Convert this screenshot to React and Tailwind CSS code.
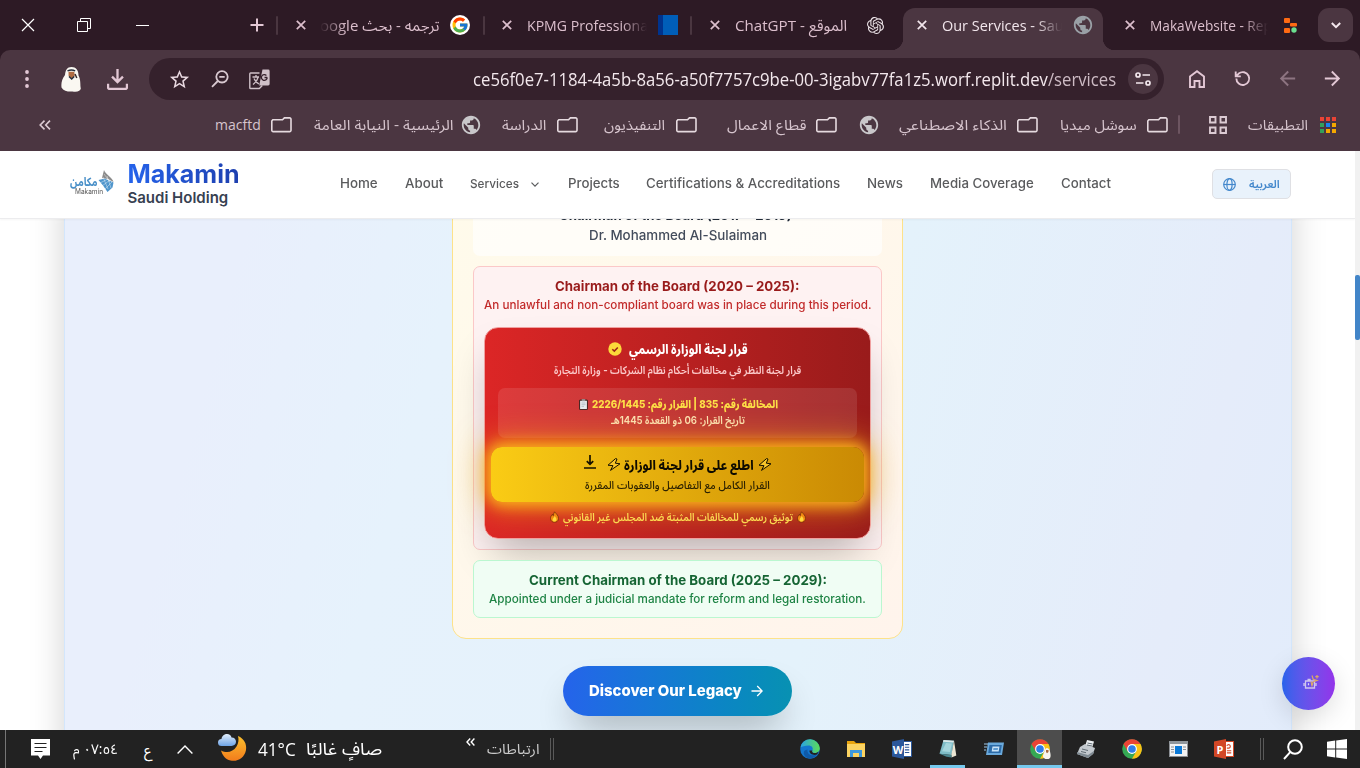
import { useLayoutEffect, useRef } from "react";
import { MdPublic, MdStarBorder, MdArrowForward, MdArrowBack } from "react-icons/md";
import { FcGoogle } from "react-icons/fc";
import { SiOpenai } from "react-icons/si";

/* One line of text, condensed or widened to fill the width of its box. */
function Fit({ className = "", inner = "", rtl = false, children }) {
  const box = useRef(null);
  const text = useRef(null);
  useLayoutEffect(() => {
    const ratio = box.current.clientWidth / text.current.offsetWidth;
    text.current.style.transform = `scaleX(${ratio})`;
  }, []);
  return (
    <div ref={box} className={`shrink-0 whitespace-nowrap ${className}`} dir="ltr">
      <span ref={text} dir={rtl ? "rtl" : "ltr"} className={`inline-block origin-left ${inner}`}>
        {children}
      </span>
    </div>
  );
}

const Cross = ({ className }) => (
  <svg viewBox="0 0 10 10" className={`h-[10px] w-[10px] shrink-0 ${className}`} stroke="currentColor" strokeWidth="1.7" fill="none">
    <path d="M.8.8l8.4 8.4M9.2.8L.8 9.2" />
  </svg>
);

const TabSep = ({ className }) => <div className={`h-[19px] w-[2px] shrink-0 rounded bg-[#4a3640] ${className}`} />;

const Folder = ({ className }) => (
  <svg viewBox="0 0 21 16" className={`h-4 w-[21px] shrink-0 text-[#e6dadf] ${className}`} fill="none" stroke="currentColor" strokeWidth="1.6">
    <path d="M1.800 2.800h9.700L13.400.9h5.300a1.300 1.300 0 0 1 1.300 1.300v11.100a1.300 1.300 0 0 1-1.300 1.300H2.100A1.300 1.300 0 0 1 .8 13.300V4z" />
  </svg>
);

function TabStrip() {
  return (
    <div className="flex h-[50px] items-center text-[15px] leading-6 text-[#dcbfcd]">
      <svg viewBox="0 0 14 14" className="ml-[21px] h-[14px] w-[14px] shrink-0" stroke="#fff" strokeWidth="1.2" fill="none">
        <path d="M1 1l12 12M13 1L1 13" />
      </svg>
      <svg viewBox="0 0 14 14" className="ml-[42px] h-[14px] w-[14px] shrink-0" stroke="#fff" strokeWidth="1" fill="none">
        <path d="M.5 3.500h10v10H.5zM3.500 3.500v-3h10v10h-3" />
      </svg>
      <div className="ml-[45px] h-px w-[13px] shrink-0 bg-white" />
      <svg viewBox="0 0 14 14" className="ml-[101px] h-[14px] w-[14px] shrink-0" stroke="#e3c8d5" strokeWidth="2" fill="none">
        <path d="M7 .5v13M.5 7h13" />
      </svg>
      <TabSep className="ml-[12px]" />
      <Cross className="ml-[18px]" />
      <div className="ml-[14px] flex w-[119px] shrink-0 justify-end overflow-hidden [mask-image:linear-gradient(to_right,transparent,#000_26px)]">
        <Fit rtl className="w-[130px]">ترجمه - بحث Google</Fit>
      </div>
      <div className="ml-[11px] flex h-5 w-5 shrink-0 items-center justify-center rounded-full bg-white">
        <FcGoogle className="h-[18px] w-[18px]" />
      </div>
      <TabSep className="ml-[13px]" />
      <Cross className="ml-[17px]" />
      <div className="ml-[15px] w-[120px] shrink-0 overflow-hidden [mask-image:linear-gradient(to_left,transparent,#000_26px)]">
        <Fit className="w-[125px]">KPMG Professional</Fit>
      </div>
      <div className="ml-[11px] h-5 w-5 shrink-0 border-l-[5px] border-[#00338d] bg-[#005eb8]" />
      <TabSep className="ml-[12px]" />
      <Cross className="ml-[18px]" />
      <Fit rtl className="ml-[15px] w-[112px]">الموقع - ChatGPT</Fit>
      <SiOpenai className="ml-[20px] h-[17px] w-[17px] shrink-0 text-[#ece4e8]" />
      <div className="mt-2 ml-[19px] flex h-[42px] w-[200px] shrink-0 items-center rounded-t-[12px] bg-[#4b3641] pb-2 text-[#f2e6ec]">
        <div className="-ml-3 h-3 w-3 shrink-0 translate-y-[19px] bg-[radial-gradient(circle_at_0_0,transparent_12px,#4b3641_12.5px)]" />
        <Cross className="ml-[14px]" />
        <div className="ml-[15px] w-[120px] shrink-0 overflow-hidden [mask-image:linear-gradient(to_left,transparent,#000_26px)]">
          <Fit className="w-[134px]">Our Services - Saudi</Fit>
        </div>
        <MdPublic className="ml-[10px] h-[22px] w-[22px] shrink-0 text-[#9aa0a6]" />
        <div className="ml-[9px] h-3 w-3 shrink-0 translate-y-[19px] bg-[radial-gradient(circle_at_100%_0,transparent_12px,#4b3641_12.5px)]" />
      </div>
      <Cross className="ml-[22px]" />
      <div className="ml-[15px] w-[118px] shrink-0 overflow-hidden [mask-image:linear-gradient(to_left,transparent,#000_26px)]">
        <Fit className="w-[134px]">MakaWebsite - Replit</Fit>
      </div>
      <svg viewBox="0 0 13 15" className="ml-[16px] h-[15px] w-[13px] shrink-0" fill="#ff6a13">
        <rect x="0" y="0" width="6" height="5" rx="1" />
        <rect x="6" y="5" width="7" height="3.500" rx="1" />
        <rect x="0" y="10" width="6" height="5" rx="1" />
        <circle cx="10" cy="12" r="2.700" fill="#6bdf8f" />
      </svg>
      <div className="ml-[21px] flex h-[34px] w-[35px] shrink-0 items-center justify-center rounded-[11px] bg-[#4b3641]">
        <svg viewBox="0 0 10 7" className="h-[7px] w-[10px]" stroke="#f4e7ed" strokeWidth="2" fill="none">
          <path d="M.8 1L5 5.200 9.200 1" />
        </svg>
      </div>
    </div>
  );
}

function Toolbar() {
  return (
    <div className="flex h-[50px] items-center rounded-t-[10px] bg-[#4b3641] pt-2 text-[#e3c8d5]">
      <svg viewBox="0 0 4 18" className="ml-[25px] h-[18px] w-[4px] shrink-0" fill="currentColor">
        <circle cx="2" cy="2" r="1.900" /><circle cx="2" cy="9" r="1.900" /><circle cx="2" cy="16" r="1.900" />
      </svg>
      <svg viewBox="0 0 20 25" className="ml-[32px] h-[25px] w-[20px] shrink-0">
        <path d="M10.500 0C6 0 4.500 3 4 8 1 12 0 16 .5 20.500c2 3.500 7 4.500 11 4 5 .8 8-.5 8.300-3C19 18 20 13 17.500 8.500 17.500 3 15 0 10.500 0z" fill="#faf8f2" />
        <path d="M7.500 4.800h5.800l.4 4.200-3 3.200L7.600 9z" fill="#b06c43" />
        <path d="M6.500 3.800c2.500-1 5.500-1 7.700 0M8 9.500l2.700 2.500 2.500-2.500" stroke="#26303d" strokeWidth="1.400" fill="none" />
        <path d="M14 7l1.800 4" stroke="#3a2c2c" strokeWidth="1.500" />
      </svg>
      <svg viewBox="0 0 20 20" className="ml-[26px] h-[21px] w-[21px] shrink-0" stroke="currentColor" strokeWidth="2.200" fill="none">
        <path d="M10 0v12M4.800 7.200L10 12.400l5.200-5.200M1 14v3.500c0 .8.700 1.500 1.500 1.500h15c.8 0 1.500-.7 1.500-1.500V14" />
      </svg>
      <div className="ml-[21px] flex h-[42px] w-[1015px] shrink-0 items-center rounded-full bg-[#35212c]">
        <MdStarBorder className="ml-[19px] h-[23px] w-[23px] shrink-0 text-[#e8d8e0]" />
        <svg viewBox="0 0 18 18" className="ml-[20px] h-[18px] w-[18px] shrink-0" stroke="#d9c9d1" strokeWidth="1.800" fill="none">
          <circle cx="11" cy="6.800" r="5.700" /><path d="M6.800 11L1 16.800M8.300 6.800h5.400" />
        </svg>
        <svg viewBox="0 0 21 21" className="ml-[20px] h-[21px] w-[21px] shrink-0" fill="none">
          <path d="M10.500 4H1.600a.8.8 0 0 0-.8.8v13.900c0 .5.300.8.8.8h8.700l3-3" stroke="#cfc0c8" strokeWidth="1.400" />
          <path d="M3.500 8h6.500M7 6v2M9 8.500c-.8 3.200-3 5.500-5 7M5 9.500c1.200 2.500 3 4.500 5 5.500" stroke="#cfc0c8" strokeWidth="1.300" />
          <path d="M13.500.5h5.700a1.400 1.400 0 0 1 1.400 1.400v13.200a1.400 1.400 0 0 1-1.400 1.400h-9z" fill="#cfc0c8" />
          <path d="M18.200 8.500h-2.700M18.200 8.500A2.900 2.900 0 1 1 17.400 6.500" stroke="#35212c" strokeWidth="1.300" />
        </svg>
        <Fit className="ml-[203px] w-[643px] text-[18px] leading-7 text-[#f3e8ed]">
          ce56f0e7-1184-4a5b-8a56-a50f7757c9be-00-3igabv77fa1z5.worf.replit.dev<span className="text-[#cdbbc4]">/services</span>
        </Fit>
        <div className="ml-[12px] flex h-[30px] w-[30px] shrink-0 items-center justify-center rounded-full bg-[#4b3641]">
          <svg viewBox="0 0 16 14" className="h-[14px] w-[16px]" stroke="#f3e8ed" strokeWidth="1.700" fill="none">
            <circle cx="3" cy="3" r="2" /><path d="M7.500 3H15M1 11h7.500" /><circle cx="13" cy="11" r="2" />
          </svg>
        </div>
      </div>
      <svg viewBox="0 0 16 18" className="ml-[25px] h-[18px] w-[16px] shrink-0" stroke="currentColor" strokeWidth="1.900" fill="none">
        <path d="M1 6.500v10.500h4.500v-6h5v6H15V6.500L8 1.200z" />
      </svg>
      <svg viewBox="0 0 18 18" className="ml-[29px] h-[17px] w-[17px] shrink-0 -translate-y-px" stroke="currentColor" strokeWidth="2" fill="none">
        <path d="M2.500 9A6.800 6.800 0 1 0 5 3.800L2 6.600M1.800 1.500v5.300h5.400" />
      </svg>
      <MdArrowBack className="ml-[25px] h-[23px] w-[23px] shrink-0 -translate-y-px text-[#8d7481]" />
      <MdArrowForward className="ml-[22px] h-[23px] w-[23px] shrink-0 -translate-y-px" />
    </div>
  );
}

const appColors = [
  "bg-[#ea4335]", "bg-[#ea4335]", "bg-[#ea4335]",
  "bg-[#34a05a]", "bg-[#1a84f0]", "bg-[#f5a800]",
  "bg-[#34a05a]", "bg-[#f5a800]", "bg-[#f5a800]",
];

function Bookmarks() {
  return (
    <div className="flex h-[51px] items-center bg-[#4b3641] pb-[2px] text-[14px] leading-6 text-[#d6c4cd]">
      <svg viewBox="0 0 12 10" className="ml-[39px] h-[10px] w-[12px] shrink-0" stroke="#dccbd3" strokeWidth="1.600" fill="none">
        <path d="M5.500.6L1.200 5l4.300 4.400M11 .6L6.700 5 11 9.400" />
      </svg>
      <Fit className="ml-[164px] w-[46px]">macftd</Fit>
      <Folder className="ml-[10px]" />
      <Fit rtl className="ml-[22px] w-[140px]">الرئيسية - النيابة العامة</Fit>
      <MdPublic className="ml-[6px] h-[22px] w-[22px] shrink-0 text-[#c9c7ca]" />
      <Fit rtl className="ml-[20px] w-[44px]">الدراسة</Fit>
      <Folder className="ml-[11px]" />
      <Fit rtl className="ml-[26px] w-[61px]">التنفيذيون</Fit>
      <Folder className="ml-[11px]" />
      <Fit rtl className="ml-[30px] w-[79px]">قطاع الاعمال</Fit>
      <Folder className="ml-[10px]" />
      <MdPublic className="ml-[21px] h-[22px] w-[22px] shrink-0 text-[#c9c7ca]" />
      <Fit rtl className="ml-[19px] w-[108px]">الذكاء الاصطناعي</Fit>
      <Folder className="ml-[10px]" />
      <Fit rtl className="ml-[22px] w-[77px]">سوشل ميديا</Fit>
      <Folder className="ml-[10px]" />
      <div className="ml-[10px] h-[19px] w-[2px] shrink-0 rounded bg-[#6d5561]" />
      <svg viewBox="0 0 18 18" className="ml-[29px] h-[18px] w-[18px] shrink-0" stroke="#dccbd3" strokeWidth="1.900" fill="none">
        <path d="M1 1h5.500v5.500H1zM11.500 1H17v5.500h-5.500zM1 11.500h5.500V17H1zM11.500 11.500H17V17h-5.500z" />
      </svg>
      <Fit rtl className="ml-[21px] w-[60px]">التطبيقات</Fit>
      <div className="ml-[12px] grid grid-cols-3 gap-[2px]">
        {appColors.map((c, i) => <div key={i} className={`h-1 w-1 ${c}`} />)}
      </div>
    </div>
  );
}

const Logo = () => (
  <div className="mb-[5px] ml-[70px] flex w-[44px] shrink-0 items-start">
    <div className="pt-[5px]">
      <Fit rtl className="w-[28px] text-[12px] leading-[14px] font-bold text-[#4a90c8]">مكامن</Fit>
      <Fit className="-mt-px ml-[5px] w-[28px] text-[7px] leading-[7px] text-[#555]">Makamin</Fit>
    </div>
    <svg viewBox="0 0 16 22" className="-ml-[5px] h-[22px] w-[16px] shrink-0" fill="none">
      <path d="M6 0C7 4 15 8 15.500 12L10 9 4 8z" fill="#8b8b8b" />
      <path d="M.5 10L7 8.500l8.500 4-1 5L9.500 22 5 15.500z" fill="#4f95cc" />
      <path d="M2 13l8-4M4 16l8-6M7 19l7-7M6 4l6 8M5 7l5 12M9 6l4 12" stroke="#fff" strokeWidth=".4" />
    </svg>
  </div>
);

const NavItem = ({ className, children }) => (
  <Fit className={`text-[13px] leading-5 font-medium ${className}`}>{children}</Fit>
);

function SiteHeader() {
  return (
    <header className="relative z-10 flex h-[68px] shrink-0 items-center border-b border-[#ececee] bg-white text-[#5a5b5d] shadow-[0_1px_2px_rgba(0,0,0,0.04)]">
      <Logo />
      <div className="ml-[13.500px] w-[112px] shrink-0 pb-[2px]">
        <Fit className="w-[112px] text-[25px] leading-[28px] font-bold" inner="bg-gradient-to-r from-[#2563eb] to-[#1e40af] bg-clip-text text-transparent">Makamin</Fit>
        <Fit className="w-[101px] text-[15px] leading-[19px] font-semibold text-[#374151]">Saudi Holding</Fit>
      </div>
      <nav className="flex items-center pb-[3px]">
        <NavItem className="ml-[100.500px] w-[38px]">Home</NavItem>
        <NavItem className="ml-[26.500px] w-[38px]">About</NavItem>
        <Fit className="ml-[27px] w-[49px] pt-[2px] text-[12px] leading-5 font-medium">Services</Fit>
        <svg viewBox="0 0 8 5" className="mt-[3px] ml-[12px] h-[5px] w-[8px] shrink-0" stroke="currentColor" strokeWidth="1.200" fill="none">
          <path d="M.5.600L4 4.100 7.500.600" />
        </svg>
        <NavItem className="ml-[29px] w-[52px]">Projects</NavItem>
        <NavItem className="ml-[26.500px] w-[194px]">Certifications &amp; Accreditations</NavItem>
        <NavItem className="ml-[27px] w-[36px]">News</NavItem>
        <NavItem className="ml-[26.500px] w-[104px]">Media Coverage</NavItem>
        <NavItem className="ml-[27px] w-[50px]">Contact</NavItem>
      </nav>
      <div className="mb-[1px] ml-[101px] flex h-[30px] w-[79px] shrink-0 items-center rounded-[5px] border border-[#dfe0e4] bg-[#e9f2fb] text-[#4488cc]">
        <svg viewBox="0 0 13 13" className="ml-[10px] h-[13px] w-[13px] shrink-0" stroke="currentColor" strokeWidth="1.200" fill="none">
          <circle cx="6.500" cy="6.500" r="5.800" /><ellipse cx="6.500" cy="6.500" rx="2.600" ry="5.800" /><path d="M.7 6.500h11.600" />
        </svg>
        <Fit rtl className="ml-[13px] w-[31px] text-[11px] leading-5 font-semibold">العربية</Fit>
      </div>
    </header>
  );
}

const Bolt = ({ className }) => (
  <svg viewBox="0 0 14 13" className={`h-[13px] w-[14px] shrink-0 ${className}`} fill="#f8c52b" stroke="#151000" strokeWidth="1" strokeLinejoin="round">
    <path d="M8.500.600L1 7.200l5 .5-2.500 4.700 9.500-6.600-4.700-.6L10 1z" />
  </svg>
);

const Flame = ({ className }) => (
  <svg viewBox="0 0 9 11" className={`h-[12px] w-[9px] shrink-0 ${className}`}>
    <path d="M4.500.3C6.500 2.500 8.600 4.200 8.500 7c0 2.500-1.800 3.700-4 3.700S.5 9.500.5 7C.5 5.300 1.300 4 2.500 2.800c.1.900.3 1.300.8 1.500C3.500 2.800 3.800 1.500 4.500.3z" fill="#f28a12" stroke="#6b2a08" strokeWidth=".7" />
    <path d="M4.600 4.500C5.800 6 6.600 7 6.500 8.300c-.1 1.200-.9 1.800-2 1.800s-1.900-.7-1.900-1.700C2.600 7 4 6.200 4.600 4.500z" fill="#ffd93b" />
  </svg>
);

function DecisionCard() {
  return (
    <div className="mt-[13px] flex h-[212px] w-[387px] flex-col items-center rounded-[14px] border border-[#f0a0a0] bg-gradient-to-r from-[#dc2626] to-[#991b1b] shadow-[0_22px_40px_-10px_rgba(0,0,0,0.28)]">
      <div className="mt-[12px] ml-[1px] flex h-[18px] items-center">
        <svg viewBox="0 0 14 14" className="h-[14px] w-[14px] shrink-0" fill="none">
          <circle cx="7" cy="7" r="6.700" fill="#fcd93a" /><path d="M4.300 7.200l2 1.900 3.500-3.600" stroke="#9a2319" strokeWidth="1.500" />
        </svg>
        <Fit rtl className="ml-[7px] w-[119px] text-[13px] leading-[18px] font-extrabold text-white">قرار لجنة الوزارة الرسمي</Fit>
      </div>
      <Fit rtl className="mt-[4px] mb-px w-[247px] text-[11px] leading-[16px] font-semibold text-[#fbc9c9]">قرار لجنة النظر في مخالفات أحكام نظام الشركات - وزارة التجارة</Fit>
      <div className="mt-[9px] flex h-[50px] w-[359px] flex-col items-center rounded-[7px] bg-white/10">
        <div className="mt-[8px] ml-px flex h-[16px] items-center">
          <svg viewBox="0 0 9 11" className="h-[11px] w-[9px] shrink-0">
            <rect x=".4" y="1" width="8.200" height="9.600" rx=".8" fill="#5f3a2b" stroke="#22201f" strokeWidth=".7" />
            <rect x="1.100" y="1.800" width="6.800" height="8.200" fill="#e6edf0" /><rect x="2.800" y=".2" width="3.400" height="2" fill="#999" />
            <path d="M2.500 4h4M2.500 5.700h4M2.500 7.400h2.500" stroke="#9aa6ac" strokeWidth=".6" />
          </svg>
          <Fit rtl className="ml-[4px] w-[186px] text-[11px] leading-[16px] font-extrabold text-[#fde047]">المخالفة رقم: 835 | القرار رقم: 2226/1445</Fit>
        </div>
        <Fit rtl className="w-[134px] text-[11px] leading-[16px] font-semibold text-[#fbe3b8]">تاريخ القرار: 06 ذو القعدة 1445هـ</Fit>
      </div>
      <div className="relative mt-[9px] flex h-[55px] w-[373px] shrink-0 flex-col items-center rounded-[11px] bg-gradient-to-r from-[#facc15] to-[#ca8a04] shadow-[0_0_14px_3px_#fbb51c,0_0_30px_8px_rgba(250,175,20,0.6)]">
        <div className="mt-[8px] flex h-[19px] items-center">
          <svg viewBox="0 0 12 14" className="mb-[6px] h-[14px] w-[12px] shrink-0" stroke="#171200" strokeWidth="1.700" fill="none">
            <path d="M6 0v9M2.800 6.200L6 9.400l3.200-3.200M0 13h12" />
          </svg>
          <Bolt className="ml-[11px]" />
          <Fit rtl className="ml-[3px] w-[130px] text-[13px] leading-[18px] font-extrabold text-[#0e0b00]">اطلع على قرار لجنة الوزارة</Fit>
          <Bolt className="ml-[4px]" />
        </div>
        <Fit rtl className="mt-[3px] w-[185px] text-[11px] leading-[16px] font-medium text-[#2a2000]">القرار الكامل مع التفاصيل والعقوبات المقررة</Fit>
      </div>
      <div className="relative mt-[6px] flex h-[18px] items-center">
        <Flame />
        <Fit rtl className="ml-[4px] w-[230px] text-[11px] leading-[16px] font-semibold text-[#fbd850]">توثيق رسمي للمخالفات المثبتة ضد المجلس غير القانوني</Fit>
        <Flame className="ml-[4px]" />
      </div>
    </div>
  );
}

function Page() {
  return (
    <div className="flex h-[579px] bg-white font-['Inter','Noto_Sans_Arabic','Noto_Sans','DejaVu_Sans',sans-serif]">
      <div className="flex w-[1355px] shrink-0 flex-col overflow-hidden">
        <SiteHeader />
        <main className="relative flex h-[511px] justify-center overflow-hidden">
          <div className="-mt-10 flex h-[600px] w-[1228px] shrink-0 flex-col items-center border-x border-[#d3e6fc] bg-[linear-gradient(105deg,#e9effc_0%,#e9effc_14%,#e6f2fc_30%,#e4f2fb_62%,#e5ecfa_88%,#e2ecfb_100%)] shadow-[0_10px_34px_-2px_rgba(0,0,0,0.2)]">
            <div className="flex h-[460px] w-[451px] shrink-0 flex-col items-center rounded-[14px] border border-[#fde28a] bg-gradient-to-br from-[#fffbeb] to-[#fff4ec]">
              <div className="flex h-[76px] w-[409px] shrink-0 flex-col items-center rounded-[7px] bg-white/65 pt-[25px]">
                <Fit className="w-[237px] text-[13.500px] leading-[20px] font-bold text-[#1f2937]">Chairman of the Board (2017 – 2019):</Fit>
                <Fit className="w-[178px] text-[13.500px] leading-[20px] font-medium text-[#434c5b]">Dr. Mohammed Al-Sulaiman</Fit>
              </div>
              <div className="mt-[10px] flex h-[284px] w-[409px] shrink-0 flex-col items-center rounded-[7px] border border-[#fbc8c8] bg-[#fef2f2] pt-[9px]">
                <Fit className="w-[245px] text-[13.500px] leading-[20px] font-bold text-[#991b1b]">Chairman of the Board (2020 – 2025):</Fit>
                <Fit className="w-[387px] text-[12px] leading-[18px] font-medium text-[#c22b2b]">An unlawful and non-compliant board was in place during this period.</Fit>
                <DecisionCard />
              </div>
              <div className="relative mt-[10px] flex h-[58px] w-[409px] shrink-0 flex-col items-center rounded-[7px] border border-[#bbf7d0] bg-[#f0fdf4] pt-[9px]">
                <Fit className="w-[298px] text-[13.500px] leading-[20px] font-bold text-[#166534]">Current Chairman of the Board (2025 – 2029):</Fit>
                <Fit className="w-[377px] text-[12px] leading-[18px] font-medium text-[#1f8445]">Appointed under a judicial mandate for reform and legal restoration.</Fit>
              </div>
            </div>
            <button className="mt-[27px] flex h-[50px] w-[229px] shrink-0 items-center rounded-full bg-gradient-to-r from-[#2563eb] to-[#0891b2] pl-[26px] text-white shadow-[0_20px_36px_-10px_rgba(0,0,0,0.3)]">
              <Fit className="w-[153px] text-left text-[15px] leading-6 font-extrabold">Discover Our Legacy</Fit>
              <svg viewBox="0 0 12 12" className="ml-[9px] h-[12px] w-[12px] shrink-0" stroke="currentColor" strokeWidth="1.300" fill="none">
                <path d="M.5 6h10.700M6.200 1l5 5-5 5" />
              </svg>
            </button>
          </div>
          <div className="absolute right-[20px] bottom-[20px] flex h-[53px] w-[53px] items-center justify-center rounded-full bg-gradient-to-r from-[#2563eb] to-[#9333ea] pb-[3px] pl-[4px] shadow-[0_8px_26px_rgba(0,0,0,0.13)]">
            <svg viewBox="0 0 16 16" className="h-[16px] w-[16px]" fill="none">
              <path d="M2.500 7h9v7h-9zM1 9v3M13 9v3M7 7V5.500H4.500" stroke="#cfc6ee" strokeWidth="1.300" />
              <path d="M5.500 9.300v2M8.800 9.300v2" stroke="#e3dcf7" strokeWidth="1.200" />
              <path d="M9 1.500l1.200 3.800 3.800 1.200-3.800 1.200L9 11.500 8 7.500M14 1v3.400M12.300 2.700h3.400" stroke="#dba868" strokeWidth="1.200" />
            </svg>
          </div>
        </main>
      </div>
      <div className="w-[5px] shrink-0 bg-[#f1f1f1] pt-[124px]">
        <div className="h-[65px] rounded-[2px] bg-[#4285c8]" />
      </div>
    </div>
  );
}

const Chrome = ({ className }) => (
  <svg viewBox="0 0 20 20" className={`h-5 w-5 shrink-0 ${className}`}>
    <circle cx="10" cy="10" r="9.800" fill="#35a854" />
    <path d="M10 10L1.500 5.100A9.800 9.800 0 0 1 18.500 5.100H10z" fill="#ea4335" />
    <path d="M10 5.100h8.500A9.800 9.800 0 0 1 10 19.800L14.500 12z" fill="#fbc116" />
    <path d="M1.500 5.100L5.800 12.400 10 10V5.100z" fill="#ea4335" />
    <circle cx="10" cy="10" r="4.900" fill="#fff" />
    <circle cx="10" cy="10" r="3.800" fill="#2f7de9" />
  </svg>
);

const Office = ({ className, color, dark, letter, children }) => (
  <div className={`flex h-5 w-5 shrink-0 items-center ${className}`}>
    <div className={`flex h-5 w-[12px] items-center justify-center text-[11px] leading-none font-bold text-white [clip-path:polygon(0_12%,100%_0,100%_100%,0_88%)] ${color}`}>{letter}</div>
    <svg viewBox="0 0 8 16" className={`h-4 w-2 border border-l-0 bg-white ${dark}`} fill="none" stroke="currentColor">{children}</svg>
  </div>
);

function Taskbar() {
  return (
    <div className="flex h-[38px] items-center bg-[#222222] text-white">
      <div className="ml-[5px] h-full w-px bg-[#767676]" />
      <svg viewBox="0 0 19 20" className="ml-[25px] h-[20px] w-[19px] shrink-0">
        <path d="M0 0h19v16.500h-7L9.500 20 7 16.500H0z" fill="#fff" /><path d="M3.500 4.500h12M3.500 8.500h12M3.500 12.500h8" stroke="#222" strokeWidth="1.200" />
      </svg>
      <Fit rtl className="ml-[23px] w-[45px] text-[14px] leading-6">٠٧:٥٤ م</Fit>
      <Fit rtl className="ml-[26px] w-[8px] text-[15px] leading-6">ع</Fit>
      <svg viewBox="0 0 16 9" className="ml-[25px] h-[9px] w-[16px] shrink-0" stroke="#fff" strokeWidth="1.400" fill="none"><path d="M.6 8.400L8 1l7.400 7.400" /></svg>
      <svg viewBox="0 0 30 30" className="ml-[25px] h-[30px] w-[30px] shrink-0">
        <defs>
          <linearGradient id="moon" x1="0" y1="0" x2="0" y2="1"><stop offset="0" stopColor="#fbc02d" /><stop offset="1" stopColor="#f27c1c" /></linearGradient>
          <linearGradient id="cloud" x1="0" y1="0" x2="0" y2="1"><stop offset="0" stopColor="#e3effc" /><stop offset="1" stopColor="#6ea4e6" /></linearGradient>
        </defs>
        <path d="M20 2c6 2.500 9 8 8 14-1.500 8-8.500 12-15.500 10.500-5-1-8-5-9.500-10 6 3 12 1.500 15.500-4 2-3.500 2.500-7 1.500-10.500z" fill="url(#moon)" />
        <path d="M3.500 12a3.500 3.500 0 0 1 0-7C4 1.500 6.500 0 9 0s4 1.500 4.500 3.500c3 0 4.500 2 4.500 4.300S16 12 13.500 12z" fill="url(#cloud)" />
      </svg>
      <Fit className="ml-[10px] w-[38px] text-[18px] leading-6">41°C</Fit>
      <Fit rtl className="ml-[10px] w-[76px] text-[17px] leading-6">صافٍ غالبًا</Fit>
      <svg viewBox="0 0 9 8" className="mb-[14px] ml-[84px] h-[8px] w-[9px] shrink-0" stroke="#fff" strokeWidth="1.400" fill="none"><path d="M4.200.5L1 4l3.200 3.500M8.400.5L5.200 4l3.200 3.500" /></svg>
      <Fit rtl className="ml-[12px] w-[53px] text-[14px] leading-6 text-[#c9c9c9]">ارتباطات</Fit>
      <div className="ml-[10px] h-[22px] w-[4px] shrink-0 border-x border-[#5a5a5a]" />
      <svg viewBox="0 0 20 20" className="ml-[246px] h-5 w-5 shrink-0">
        <defs><linearGradient id="edge" x1="0" y1="0" x2="1" y2="0"><stop offset="0" stopColor="#2aa3e3" /><stop offset="1" stopColor="#5bdc57" /></linearGradient></defs>
        <circle cx="10" cy="10" r="9.800" fill="#1477cf" />
        <path d="M.4 8.500A9.800 9.800 0 0 1 19.800 9c0 3.500-2.500 5-5 5-2 0-3.300-1-2.500-2.300 1.500-3-.8-5.200-3.800-5.200C5 6.500 2 7.500.4 8.500z" fill="url(#edge)" />
        <path d="M7.500 10.500c-.8 4 3 7.500 9.500 5-3.500 5.500-11 5-13 0-.8-3 .5-4.500 3.500-5z" fill="#0f5aa8" />
        <path d="M12.400 11.500c-1 1.500.2 2.600 2.500 2.600 1.400 0 3.200-.6 4-1.500l-1.800 3c-4 1.300-8-.8-7.600-4z" fill="#222" />
      </svg>
      <svg viewBox="0 0 20 20" className="ml-[26px] h-5 w-5 shrink-0">
        <path d="M1 2h7l2 2h9v3H1z" fill="#e9a50f" /><rect x="1" y="5" width="18" height="13" fill="#fcd462" /><path d="M4 18v-7h12v7h-3v-4H7v4z" fill="#3d98dd" />
      </svg>
      <Office className="ml-[26px]" color="bg-[#2b579a]" dark="border-[#2b579a] text-[#2b579a]" letter="W"><path d="M1 3h5M1 6h5M1 9h5M1 12h5" strokeWidth="1.300" /></Office>
      <div className="ml-[18px] flex h-full w-[35px] shrink-0 flex-col items-center border-b-[3px] border-[#76c9ee] pt-[9px]">
        <svg viewBox="0 0 20 20" className="h-5 w-5 shrink-0">
          <path d="M5.500 1l10.500.8L13.500 16 1.500 14.800z" fill="#7fbcc7" /><path d="M8 4l6 .5L12 13l-8-.8z" fill="#a5d5dc" /><path d="M5.500 1l10.500.8-.5 1.700L5 2.700z" fill="#dde9ea" /><path d="M16 1.800l2.300 14.700-4.800 2L13.300 16z" fill="#ece6d4" /><path d="M1.500 14.800l12 1.200v2.500l-5-.8z" fill="#4a858f" />
        </svg>
      </div>
      <svg viewBox="0 0 20 20" className="ml-[19px] h-5 w-5 shrink-0">
        <path d="M4 3.500h16L18 16H2z" fill="#6aa9dc" /><path d="M5.500 6h12.300l-1.300 8H4.200z" fill="#2c6ba8" /><path d="M8.500 7.500h7l-.8 5H7.700z" fill="#c8e2f7" /><path d="M9.500 9h4.500l-.3 2H9.200z" fill="#5d9ad0" /><path d="M0 5h4M0 8h3M0 11h2" stroke="#9fc9ea" />
      </svg>
      <div className="ml-[13px] flex h-full w-[45px] shrink-0 justify-center border-b-[3px] border-[#76c9ee] bg-[#4d4d4d] pt-[9px]">
        <div className="relative h-5 w-5">
          <Chrome />
          <svg viewBox="0 0 8 11" className="absolute -right-px bottom-0 h-[11px] w-[8px]"><path d="M4 0C2 0 2 3 .5 6S1 11 4 11s4-1 3.500-5S6 0 4 0z" fill="#f7f5ef" /><path d="M3 2h2.500v2L4 5.200 3 4z" fill="#a7683f" /></svg>
        </div>
      </div>
      <svg viewBox="0 0 20 20" className="ml-[14px] h-5 w-5 shrink-0">
        <path d="M11 1l7 1.500-2.500 8-7-1.500z" fill="#eef1f3" /><path d="M4 8l5-3 10 4-2 6-5 4L1 15z" fill="#c3c9ce" /><path d="M1 13l11 3 6-4v2l-6 5-11-4z" fill="#7f8a92" /><path d="M11.500 4l5 1M11 6l5 1M6 10l6 1.500M5 12.500l5 1.200" stroke="#606b73" />
      </svg>
      <Chrome className="ml-[26px]" />
      <svg viewBox="0 0 20 16" className="ml-[27px] h-4 w-5 shrink-0">
        <rect x=".5" y=".5" width="18" height="15" fill="#f2f2f2" stroke="#8b8f94" /><path d="M0 0h19v3H0z" fill="#90969b" /><rect x="6" y="5" width="7" height="8" fill="#0a78d6" /><path d="M2 6h3M2 8.500h3M2 11h3M14 6h3M14 8.500h3" stroke="#8b8f94" />
      </svg>
      <Office className="ml-[25px]" color="bg-[#d24726]" dark="border-[#d24726] text-[#d24726]" letter="P"><path d="M1 4.500a2 2 0 1 1 2.500 2.500H1M1 10h5M1 12.500h5" strokeWidth="1.300" /></Office>
      <div className="ml-[26px] h-[22px] w-[4px] shrink-0 border-x border-[#5a5a5a]" />
      <svg viewBox="0 0 20 21" className="ml-[19px] h-[21px] w-[20px] shrink-0" stroke="#fff" strokeWidth="2" fill="none"><circle cx="12" cy="8" r="6.800" /><path d="M7.200 13.200L1 20" /></svg>
      <svg viewBox="0 0 20 20" className="ml-[24px] h-5 w-5 shrink-0" fill="#fff"><path d="M0 2.800l8.200-1.200v7.900H0zM9.200 1.500L20 0v9.500H9.200zM0 10.500h8.200v7.900L0 17.200zM9.200 10.500H20V20L9.200 18.500z" /></svg>
    </div>
  );
}

export default function App() {
  return (
    <div className="flex h-[768px] w-[1360px] flex-col overflow-hidden bg-[#2d1a25] font-['Open_Sans','Noto_Sans_Arabic','Noto_Sans','DejaVu_Sans',sans-serif]">
      <TabStrip />
      <Toolbar />
      <Bookmarks />
      <Page />
      <Taskbar />
    </div>
  );
}
